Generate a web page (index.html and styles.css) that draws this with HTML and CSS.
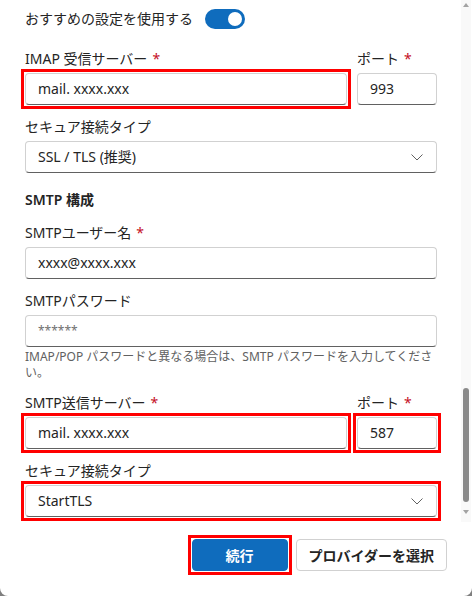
FILE: index.html
```html
<!DOCTYPE html>
<html lang="ja">
<head>
    <meta charset="UTF-8">
    <meta name="viewport" content="width=device-width, initial-scale=1.0">
    <title>アカウントの追加</title>
    <link rel="stylesheet" href="styles.css">
</head>
<body>
    <div class="dialog">
        <div class="dialog-body">
            <div class="form">
                <div class="switch-row">
                    <span class="text">おすすめの設定を使用する</span>
                    <span class="switch"><span class="knob"></span></span>
                </div>

                <div class="row">
                    <div class="field grow">
                        <label>IMAP 受信サーバー<span class="req">*</span></label>
                        <div class="hl"><div class="input">mail. xxxx.xxx</div></div>
                    </div>
                    <div class="field port">
                        <label>ポート<span class="req">*</span></label>
                        <div class="input">993</div>
                    </div>
                </div>

                <div class="field">
                    <label>セキュア接続タイプ</label>
                    <div class="input select">
                        <span>SSL / TLS (推奨)</span>
                        <svg width="12" height="7" viewBox="0 0 12 7"><polyline points="0.5,0.5 6,6 11.5,0.5" fill="none" stroke="#616161" stroke-width="1"/></svg>
                    </div>
                </div>

                <h3 class="section">SMTP 構成</h3>

                <div class="field">
                    <label>SMTPユーザー名<span class="req">*</span></label>
                    <div class="input">xxxx@xxxx.xxx</div>
                </div>

                <div class="field">
                    <label>SMTPパスワード</label>
                    <div class="input placeholder">******</div>
                    <p class="hint">IMAP/POP パスワードと異なる場合は、SMTP パスワードを入力してくださ<br>い。</p>
                </div>

                <div class="row">
                    <div class="field grow">
                        <label>SMTP送信サーバー<span class="req">*</span></label>
                        <div class="hl"><div class="input">mail. xxxx.xxx</div></div>
                    </div>
                    <div class="field port">
                        <label>ポート<span class="req">*</span></label>
                        <div class="hl"><div class="input">587</div></div>
                    </div>
                </div>

                <div class="field">
                    <label>セキュア接続タイプ</label>
                    <div class="hl">
                        <div class="input select">
                            <span>StartTLS</span>
                            <svg width="12" height="7" viewBox="0 0 12 7"><polyline points="0.5,0.5 6,6 11.5,0.5" fill="none" stroke="#616161" stroke-width="1"/></svg>
                        </div>
                    </div>
                </div>
            </div>

            <div class="scrollbar">
                <span class="sb-up"></span>
                <span class="sb-thumb"></span>
                <span class="sb-down"></span>
            </div>
        </div>

        <div class="dialog-actions">
            <span class="hl"><button class="btn primary">続行</button></span>
            <button class="btn">プロバイダーを選択</button>
        </div>
    </div>
</body>
</html>
```

FILE: styles.css
```css
html, body {
    margin: 0;
    background: #7f7f7f;
}

body {
    font-family: "Noto Sans", "Noto Sans CJK JP", sans-serif;
    font-size: 14px;
    color: #242424;
}

.dialog {
    width: 472px;
    height: 596px;
    background: #fff;
    border-radius: 0 0 8px 8px;
    overflow: hidden;
    display: flex;
    flex-direction: column;
}

.dialog-body {
    height: 522px;
    display: flex;
    overflow: hidden;
}

.form {
    width: 412px;
    padding: 9px 0 0 25px;
    display: flex;
    flex-direction: column;
}

/* toggle row */
.switch-row {
    display: flex;
    align-items: center;
    gap: 12px;
    height: 20px;
    margin-bottom: 20px;
}

.switch-row .text {
    line-height: 20px;
}

.switch {
    width: 40px;
    height: 20px;
    box-sizing: border-box;
    padding: 3px;
    border-radius: 10px;
    background: #0f6cbd;
    display: flex;
    justify-content: flex-end;
}

.knob {
    width: 14px;
    height: 14px;
    border-radius: 50%;
    background: #fff;
}

/* fields */
.row {
    display: flex;
    gap: 10px;
}

.field {
    display: flex;
    flex-direction: column;
    gap: 4px;
    margin-bottom: 12px;
}

.field.grow {
    flex: 1;
}

.field.port {
    width: 80px;
}

label {
    line-height: 20px;
}

.req {
    color: #c50f1f;
    padding-left: 5px;
}

.input {
    height: 32px;
    box-sizing: border-box;
    padding: 0 12px;
    border: 1px solid #d1d1d1;
    border-bottom-color: #616161;
    border-radius: 4px;
    background: #fff;
    display: flex;
    align-items: center;
    line-height: 20px;
}

.input.select {
    justify-content: space-between;
    padding-right: 13px;
}

.input.placeholder {
    color: #707070;
    font-size: 12px;
}

.hint {
    margin: -2px 0 0;
    font-size: 12px;
    line-height: 16px;
    color: #616161;
}

.section {
    margin: 5px 0 13px;
    font-size: 14px;
    font-weight: 600;
    line-height: 20px;
}

/* red highlight frame */
.hl {
    border: 3px solid #ff0000;
    padding: 1px;
    margin: -4px;
}

/* scrollbar */
.scrollbar {
    width: 10px;
    margin-left: auto;
    margin-right: 1px;
    background: #f9f9f9;
    display: flex;
    flex-direction: column;
    align-items: center;
    padding: 3px 0 8px;
    box-sizing: border-box;
}

.sb-up {
    width: 0;
    height: 0;
    border-left: 3px solid transparent;
    border-right: 3px solid transparent;
    border-bottom: 4px solid #a3a3a3;
}

.sb-thumb {
    width: 6px;
    height: 114px;
    margin-top: auto;
    margin-bottom: 8px;
    border-radius: 3px;
    background: #8a8a8a;
}

.sb-down {
    width: 0;
    height: 0;
    border-left: 3px solid transparent;
    border-right: 3px solid transparent;
    border-top: 4px solid #a3a3a3;
}

/* footer buttons */
.dialog-actions {
    display: flex;
    justify-content: flex-end;
    align-items: center;
    gap: 8px;
    padding: 17px 25px 25px 0;
}

.dialog-actions .hl {
    display: flex;
}

.btn {
    height: 32px;
    min-width: 96px;
    padding: 0 12px;
    border: 1px solid #d1d1d1;
    border-radius: 4px;
    background: #fff;
    color: #242424;
    font-family: inherit;
    font-size: 14px;
    font-weight: 600;
}

.btn.primary {
    background: #0f6cbd;
    border-color: #0f6cbd;
    color: #fff;
}
```
